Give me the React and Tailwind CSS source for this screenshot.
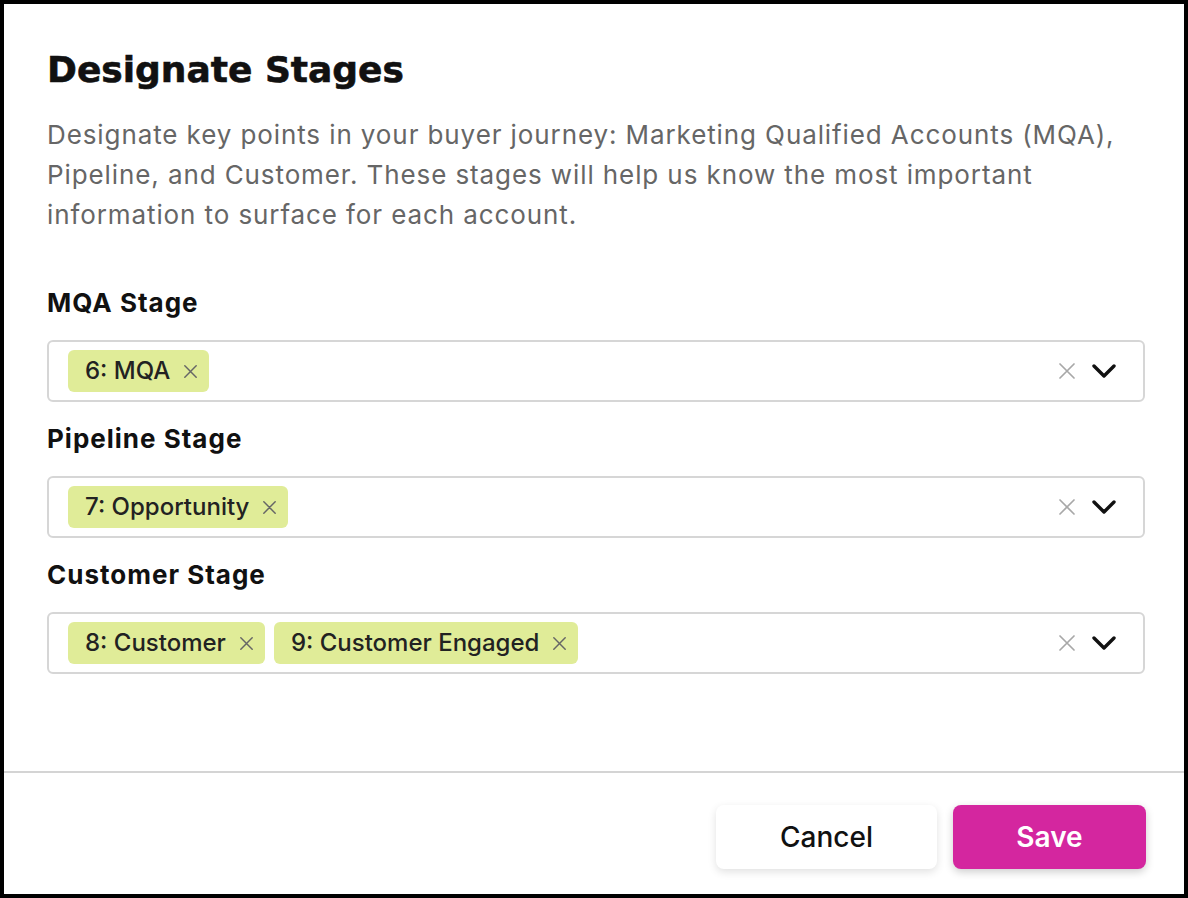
const stages = [
  { label: 'MQA Stage', chips: ['6: MQA'] },
  { label: 'Pipeline Stage', chips: ['7: Opportunity'] },
  { label: 'Customer Stage', chips: ['8: Customer', '9: Customer Engaged'] },
]

function Cross({ size, className, stroke = 1.6 }) {
  return (
    <svg width={size} height={size} viewBox="0 0 16 16" className={className} fill="none">
      <path d="M1 1 L15 15 M15 1 L1 15" stroke="currentColor" strokeWidth={stroke} strokeLinecap="round" />
    </svg>
  )
}

function Chip({ text }) {
  return (
    <span className="flex items-center h-[42px] pl-[17px] pr-[12px] rounded-md bg-[#e0ec98] text-[#222] text-[24px] font-medium">
      {text}
      <Cross size={13} className="ml-[14px] text-[#666]" stroke={1.8} />
    </span>
  )
}

function StageSelect({ chips }) {
  return (
    <div className="flex items-center h-[62px] px-[19px] border-2 border-[#d6d6d6] rounded-md">
      <div className="flex flex-1 items-center gap-[9px]">
        {chips.map((c) => (
          <Chip key={c} text={c} />
        ))}
      </div>
      <Cross size={16} className="text-[#a8a8a8]" stroke={1.7} />
      <svg width="24" height="14" viewBox="0 0 24 14" className="ml-[17px] mr-[8px] text-[#111]" fill="none">
        <path d="M2 2 L12 12 L22 2" stroke="currentColor" strokeWidth="3.4" strokeLinecap="round" strokeLinejoin="round" />
      </svg>
    </div>
  )
}

export default function App() {
  return (
    <div
      className="w-[1188px] h-[898px] border-4 border-black bg-white flex flex-col"
      style={{ fontFamily: 'Inter, "Noto Sans", sans-serif' }}
    >
      <div className="flex-1 pl-[43px] pr-[39px] pt-[45px]">
        <h1 className="text-[36px] leading-[42px] font-bold text-[#111] font-['DejaVu_Sans',sans-serif] [-webkit-text-stroke:0.6px_#111]">
          Designate Stages
        </h1>
        <p className="mt-[24px] text-[26px] leading-[40px] text-[#666] tracking-[0.9px] whitespace-nowrap">
          Designate key points in your buyer journey: Marketing Qualified Accounts (MQA),
          <br />
          Pipeline, and Customer. These stages will help us know the most important
          <br />
          information to surface for each account.
        </p>
        <div className="mt-[52px] flex flex-col">
          {stages.map((s) => (
            <div key={s.label} className="mb-[21px]">
              <div className="text-[26px] leading-[32px] font-bold text-[#111] tracking-[1px] mb-[21px]">
                {s.label}
              </div>
              <StageSelect chips={s.chips} />
            </div>
          ))}
        </div>
      </div>
      <div className="h-[2px] bg-[#d4d4d4]" />
      <div className="flex justify-end gap-[16px] pt-[32px] pb-[25px] pr-[38px]">
        <button className="w-[221px] h-[64px] rounded-lg bg-white text-[28px] font-medium text-[#111] shadow-[0_3px_8px_rgba(0,0,0,0.12)]">
          Cancel
        </button>
        <button className="w-[193px] h-[64px] rounded-lg bg-[#d4269f] text-[28px] font-semibold text-white shadow-[0_3px_8px_rgba(0,0,0,0.2)]">
          Save
        </button>
      </div>
    </div>
  )
}
